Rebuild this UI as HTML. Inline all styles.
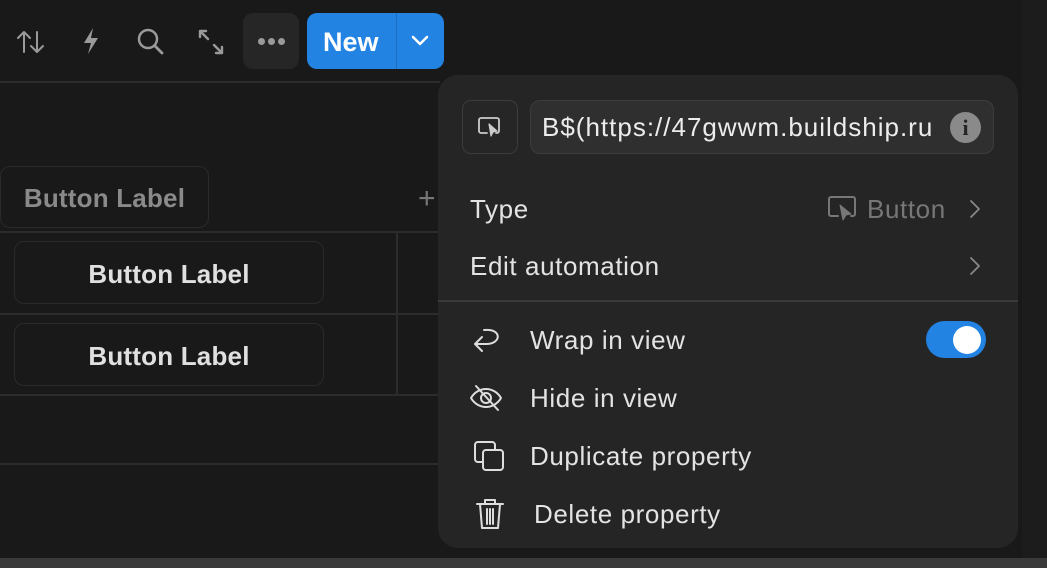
<!DOCTYPE html>
<html><head><meta charset="utf-8"><style>
*{margin:0;padding:0;box-sizing:border-box}
body{width:1047px;height:568px;background:#191919;position:relative;overflow:hidden;font-family:"Liberation Sans",sans-serif;color:#e6e6e6}
.a{position:absolute}
.hl{position:absolute;height:2px;background:#2c2c2c}
.bl{position:absolute;border:1px solid #2a2a2a;border-radius:10px;font-weight:bold;font-size:26px;text-align:center;line-height:62px;color:#e0e0e0;letter-spacing:0.2px}
.menu{position:absolute;left:438px;top:75px;width:580px;height:473px;background:#252525;border-radius:20px}
.mt{position:absolute;font-size:26px;color:#e3e3e3;white-space:nowrap;letter-spacing:0.6px}
svg{position:absolute;fill:none;stroke:#9a9a9a;stroke-width:2;stroke-linecap:round;stroke-linejoin:round}
</style></head><body>
<svg style="left:16px;top:28px" width="30" height="28" viewBox="0 0 30 28"><path d="M8 24V4M2 10l6-6 6 6M21 4v20M15 18l6 6 6-6"/></svg>
<svg style="left:80px;top:26px" width="22" height="30" viewBox="0 0 22 30"><path d="M13 2L4 17h7l-3 11 10-16h-7z" fill="#9a9a9a" stroke="none"/></svg>
<svg style="left:136px;top:27px" width="30" height="30" viewBox="0 0 30 30"><circle cx="12" cy="12" r="9" stroke-width="2.5"/><path d="M19 19l7 7" stroke-width="2.8"/></svg>
<svg style="left:197px;top:28px" width="28" height="28" viewBox="0 0 28 28"><path d="M3 3l8 8M3 3v6M3 3h6M25 25l-8-8M25 25v-6M25 25h-6" stroke-width="2.4"/></svg>
<div class="a" style="left:243px;top:13px;width:56px;height:56px;background:#262626;border-radius:10px"></div>
<div class="a" style="left:258px;top:38px;width:7px;height:7px;border-radius:50%;background:#9a9a9a"></div>
<div class="a" style="left:268px;top:38px;width:7px;height:7px;border-radius:50%;background:#9a9a9a"></div>
<div class="a" style="left:278px;top:38px;width:7px;height:7px;border-radius:50%;background:#9a9a9a"></div>
<div class="a" style="left:307px;top:13px;width:137px;height:56px;background:#2383e2;border-radius:10px"></div>
<div class="a" style="left:396px;top:13px;width:1px;height:56px;background:#1a6fc4"></div>
<div class="a" style="left:323px;top:27px;font-size:27px;font-weight:bold;color:#fff">New</div>
<svg style="left:410px;top:34px;stroke:#fff" width="20" height="14" viewBox="0 0 20 14"><path d="M3 3l7 7 7-7" stroke-width="2.5"/></svg>
<div class="hl" style="left:0;top:81px;width:440px"></div>
<div class="bl" style="left:0;top:166px;width:209px;height:62px;color:#8a8a8a;line-height:62px">Button Label</div>
<div class="a" style="left:418px;top:182px;font-size:30px;color:#777;font-weight:300">+</div>
<div class="hl" style="left:0;top:231px;width:440px"></div>
<div class="a" style="left:396px;top:232px;width:2px;height:163px;background:#2c2c2c"></div>
<div class="bl" style="left:14px;top:241px;width:310px;height:63px;line-height:64px">Button Label</div>
<div class="hl" style="left:0;top:313px;width:440px"></div>
<div class="bl" style="left:14px;top:323px;width:310px;height:63px;line-height:64px">Button Label</div>
<div class="hl" style="left:0;top:394px;width:440px"></div>
<div class="hl" style="left:0;top:463px;width:440px"></div>
<div class="a" style="left:0;top:558px;width:1047px;height:10px;background:#3a3a3a"></div>
<div class="a" style="left:1022px;top:0;width:25px;height:558px;background:#1c1c1c"></div>
<div class="menu"></div>
<div class="a" style="left:462px;top:100px;width:56px;height:54px;border:1px solid #3c3c3c;border-radius:9px;background:#262626"></div>
<svg style="left:477px;top:114px;stroke:#ccc" width="26" height="26" viewBox="0 0 26 26"><path d="M10 19H4a2 2 0 0 1-2-2V6a2 2 0 0 1 2-2h16a2 2 0 0 1 2 2v11a2 2 0 0 1-2 2h-1" stroke-width="1.8"/><path d="M12 10l2 12 2-4 4-1z" fill="#ccc" stroke-width="1.2"/></svg>
<div class="a" style="left:530px;top:100px;width:464px;height:54px;border:1px solid #3c3c3c;border-radius:10px;background:#2f2f2f"></div>
<div class="mt" style="left:542px;top:112px;color:#ececec;letter-spacing:1px">B$(https://47gwwm.buildship.ru</div>
<div class="a" style="left:950px;top:112px;width:31px;height:31px;border-radius:50%;background:#8a8a8a;color:#252525;font-weight:bold;font-family:'Liberation Serif',serif;font-size:22px;text-align:center;line-height:31px">i</div>
<div class="mt" style="left:470px;top:194px">Type</div>
<svg style="left:827px;top:195px;stroke:#777" width="32" height="28" viewBox="0 0 32 28"><path d="M11 21H4a2 2 0 0 1-2-2V4a2 2 0 0 1 2-2h22a2 2 0 0 1 2 2v15a2 2 0 0 1-2 2h-2"/><path d="M13 10l3 15 3-5 5-1z" fill="#777" stroke-width="1"/></svg>
<div class="mt" style="left:867px;top:194px;color:#777">Button</div>
<svg style="left:968px;top:198px;stroke:#888" width="14" height="22" viewBox="0 0 14 22"><path d="M3 3l8 8-8 8" stroke-width="1.8"/></svg>
<div class="mt" style="left:470px;top:251px">Edit automation</div>
<svg style="left:968px;top:255px;stroke:#888" width="14" height="22" viewBox="0 0 14 22"><path d="M3 3l8 8-8 8" stroke-width="1.8"/></svg>
<div class="a" style="left:438px;top:300px;width:580px;height:2px;background:#3a3a3a"></div>
<svg style="left:472px;top:326px;stroke:#ddd" width="34" height="28" viewBox="0 0 34 28"><path d="M12 4C30 2 30 18 14 18H4M10 11l-7 7 7 7" stroke-width="2"/></svg>
<div class="mt" style="left:530px;top:325px">Wrap in view</div>
<div class="a" style="left:926px;top:321px;width:60px;height:37px;border-radius:19px;background:#2383e2"></div>
<div class="a" style="left:953px;top:326px;width:28px;height:28px;border-radius:50%;background:#fff"></div>
<svg style="left:468px;top:383px;stroke:#ddd" width="36" height="30" viewBox="0 0 36 30"><path d="M3 15C10 3 26 3 33 15 26 27 10 27 3 15z" stroke-width="2"/><circle cx="18" cy="15" r="5" stroke-width="2"/><path d="M8 3l22 24" stroke-width="2"/></svg>
<div class="mt" style="left:530px;top:383px">Hide in view</div>
<svg style="left:473px;top:440px;stroke:#ddd" width="34" height="34" viewBox="0 0 34 34"><rect x="2" y="2" width="20" height="20" rx="3" stroke-width="2"/><rect x="10" y="10" width="20" height="20" rx="3" fill="#252525" stroke-width="2"/></svg>
<div class="mt" style="left:530px;top:441px">Duplicate property</div>
<svg style="left:474px;top:497px;stroke:#ddd" width="32" height="34" viewBox="0 0 32 34"><path d="M3 7h26M11 7V3h10v4M6 7l2 24h16l2-24M13 12v15M16 12v15M19 12v15" stroke-width="2"/></svg>
<div class="mt" style="left:534px;top:499px">Delete property</div>
</body></html>
